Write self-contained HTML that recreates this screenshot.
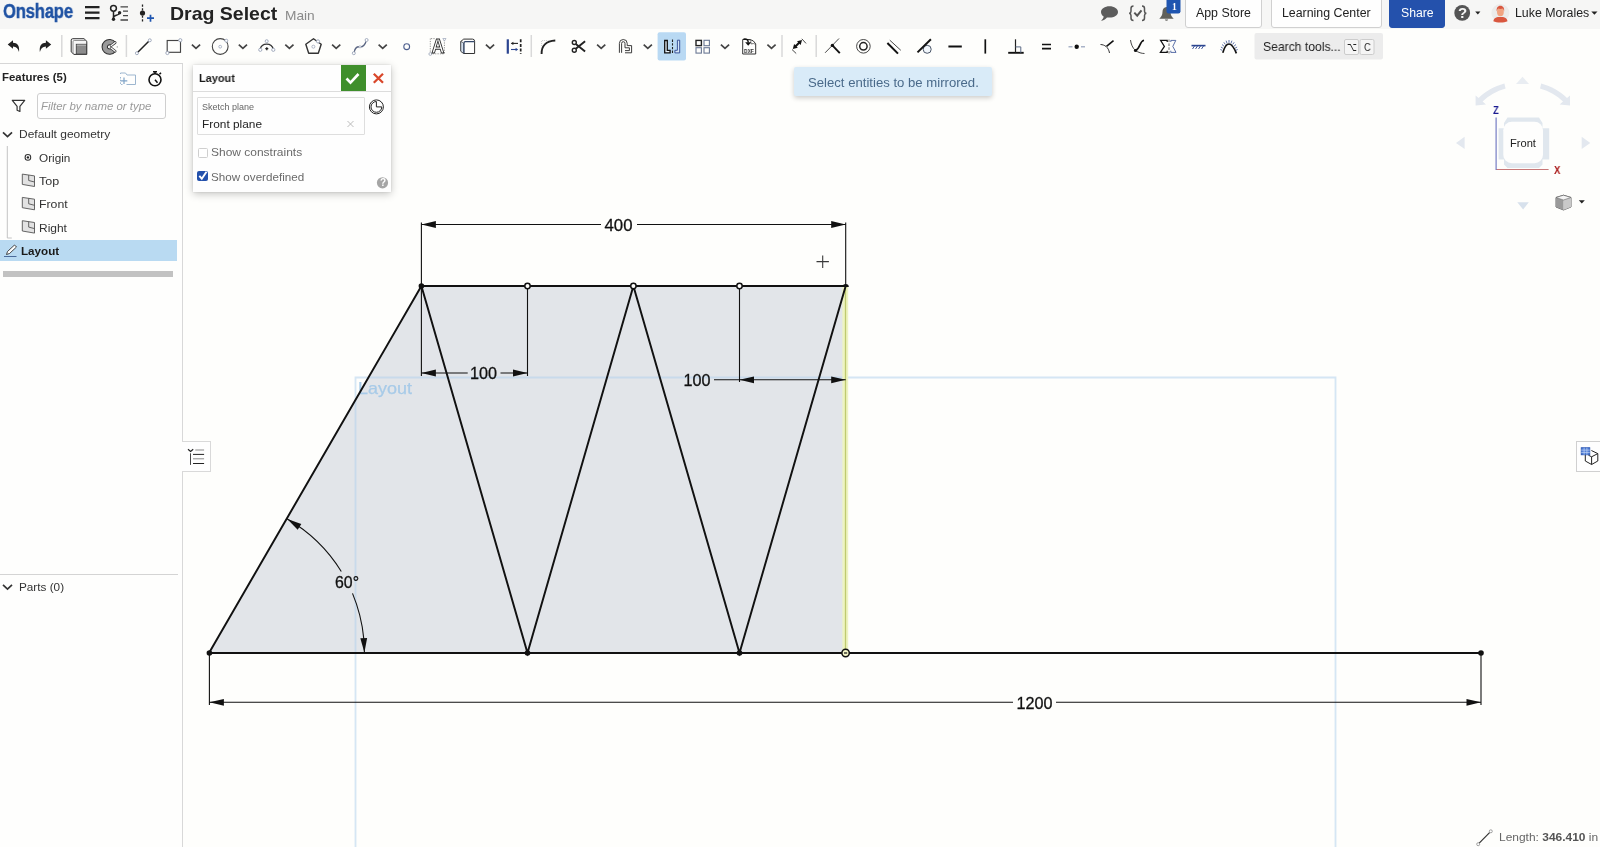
<!DOCTYPE html>
<html lang="en">
<head>
<meta charset="utf-8">
<title>Drag Select - Onshape</title>
<style>
*{box-sizing:border-box;margin:0;padding:0}
html,body{width:1600px;height:847px;overflow:hidden;background:#fefefc;font-family:"Liberation Sans",sans-serif;color:#222}
#app{position:relative;width:1600px;height:847px;overflow:hidden;background:#fefefc}
.abs{position:absolute}
.t{position:absolute;white-space:nowrap;transform-origin:0 50%;line-height:1;will-change:transform}
#hdr{position:absolute;left:0;top:0;width:1600px;height:29px;background:#f6f6f5}
#tb{position:absolute;left:0;top:28px;width:1600px;height:36px}
.btn{position:absolute;top:-3px;height:30.5px;background:#fefefe;border:1px solid #d0d0d0;border-radius:3px}
#panel{position:absolute;left:0;top:64px;width:183px;height:783px;background:#fefefd;border-right:1px solid #d8d8d8}
#panel:before{content:"";position:absolute;left:0;top:-1px;width:183px;height:1px;background:#d6d6d6}
#dlg{position:absolute;left:193px;top:65px;width:198px;height:126.5px;background:#fefefe;box-shadow:0 2px 8px rgba(0,0,0,.23),0 0 2px rgba(0,0,0,.12)}
#cv{position:absolute;left:0;top:0;width:1600px;height:847px}
svg{will-change:transform}
</style>
</head>
<body>
<div id="app">

<!-- CANVAS -->
<svg id="cv" viewBox="0 0 1600 847">
<defs>
<path id="arR" d="M0 0 L-14.5 -3.4 L-14.5 3.4 Z" fill="#111"/>
</defs>
<!-- sketch region fill -->
<polygon points="209,653 421.4,286 845.7,286 845.7,653" fill="#e2e5e9"/>
<!-- plane outline -->
<path d="M355.5 847 V377.5 H1335.5 V847" fill="none" stroke="#b3d1ec" stroke-opacity=".55" stroke-width="1.8"/>
<text x="358" y="394" font-family="'Liberation Sans',sans-serif" font-size="16.5" fill="#a8cbe8" stroke="#a8cbe8" stroke-width=".25" textLength="54" lengthAdjust="spacingAndGlyphs">Layout</text>
<!-- yellow mirror line -->
<line x1="845.3" y1="287" x2="845.3" y2="653" stroke="#eef4c2" stroke-width="5.8"/>
<line x1="845.5" y1="287" x2="845.5" y2="653" stroke="#bfca70" stroke-width="1.3"/>
<!-- sketch lines -->
<g stroke="#111" stroke-width="1.95" stroke-linecap="round" fill="none">
<path d="M209 653 L421.4 286 L845.7 286"/>
<path d="M421.4 286 L527.5 653 L633.4 286 L739.5 653 L845.7 286"/>
<path d="M209 653 H1481"/>
</g>
<!-- dimension lines -->
<g stroke="#111" stroke-width="1.1" fill="none">
<path d="M421.4 286 V222.5 M845.7 286 V222.5"/>
<path d="M421.4 224.5 H601 M637 224.5 H845.7"/>
<path d="M421.4 286 V376 M527.5 286 V376"/>
<path d="M421.4 373 H467.7 M500.5 373 H527.5"/>
<path d="M739.5 286 V382"/>
<path d="M714 379.8 H845.7"/>
<path d="M209.4 653 V705 M1481 653 V705"/>
<path d="M209.4 702.3 H1013 M1056 702.3 H1481"/>
<path d="M286.9 518.8 A155 155 0 0 1 341.3 571.5"/>
<path d="M352.5 593.4 A155 155 0 0 1 364.4 653"/>
</g>
<!-- arrows -->
<use href="#arR" transform="translate(421.4 224.5) rotate(180)"/>
<use href="#arR" transform="translate(845.7 224.5)"/>
<use href="#arR" transform="translate(421.4 373) rotate(180)"/>
<use href="#arR" transform="translate(527.5 373)"/>
<use href="#arR" transform="translate(739.5 379.8) rotate(180)"/>
<use href="#arR" transform="translate(845.7 379.8)"/>
<use href="#arR" transform="translate(209.4 702.3) rotate(180)"/>
<use href="#arR" transform="translate(1481 702.3)"/>
<use href="#arR" transform="translate(287.3 519) rotate(-147.3)"/>
<use href="#arR" transform="translate(364.4 652.6) rotate(87.3)"/>
<!-- dim text -->
<g font-family="'Liberation Sans',sans-serif" font-size="16.5" fill="#111" stroke="#111" stroke-width=".3" text-anchor="middle">
<text x="618.5" y="231" textLength="28" lengthAdjust="spacingAndGlyphs">400</text>
<text x="483.5" y="379" textLength="27" lengthAdjust="spacingAndGlyphs">100</text>
<text x="697" y="386" textLength="27" lengthAdjust="spacingAndGlyphs">100</text>
<text x="1034.5" y="708.5" textLength="36" lengthAdjust="spacingAndGlyphs">1200</text>
<text x="347" y="588" textLength="24" lengthAdjust="spacingAndGlyphs">60°</text>
</g>
<!-- points -->
<g fill="#111">
<circle cx="209.4" cy="653" r="2.8"/>
<circle cx="421.4" cy="286" r="2.8"/>
<circle cx="527.5" cy="653" r="2.8"/>
<circle cx="739.5" cy="653" r="2.8"/>
<circle cx="1481" cy="653" r="2.8"/>
<path d="M842.6 287 a3.1 3.1 0 0 1 6.2 0 z"/>
</g>
<g fill="#fefefc" stroke="#111" stroke-width="1.5">
<circle cx="527.5" cy="286" r="2.7"/>
<circle cx="633.4" cy="286" r="2.7"/>
<circle cx="739.5" cy="286" r="2.7"/>
</g>
<circle cx="845.6" cy="653" r="3.7" fill="#f4f6c8" stroke="#111" stroke-width="1.5"/>
<path d="M844 653 h3.2" stroke="#111" stroke-width="1.2"/>
<!-- cursor -->
<path d="M816.5 261.6 h12.4 M822.7 255.5 v12.4" stroke="#3a3a3a" stroke-width="1.1" fill="none"/>

</svg>

<!-- HEADER -->
<div id="hdr">
<span class="t" id="logo" style="left:3px;top:0.82px;font-size:20.3px;font-weight:bold;color:#1f52a3;letter-spacing:-.3px;-webkit-text-stroke:.45px #1f52a3;transform:scaleX(0.825)">Onshape</span>
<span class="t" id="ttl" style="left:170.48px;top:5.85px;font-size:17.9px;font-weight:bold;color:#222;transform:scaleX(1.09)">Drag Select</span>
<span class="t" id="main" style="left:284.87px;top:8.83px;font-size:13.2px;color:#8a8a8a;transform:scaleX(1.04)">Main</span>
<div class="btn" style="left:1185px;width:77px"></div>
<span class="t" id="apps" style="left:1196.42px;top:6.74px;font-size:12px;color:#222;transform:scaleX(1.03)">App Store</span>
<div class="btn" style="left:1271px;width:111px"></div>
<span class="t" id="lc" style="left:1281.52px;top:6.74px;font-size:12px;color:#222;transform:scaleX(1.03)">Learning Center</span>
<div class="btn" style="left:1389px;width:56px;background:#2451ac;border-color:#2451ac"></div>
<span class="t" id="share" style="left:1400.72px;top:6.74px;font-size:12px;color:#fff;transform:scaleX(1.02)">Share</span>
<span class="t" id="user" style="left:1514.52px;top:6.74px;font-size:12px;color:#222;transform:scaleX(1.03)">Luke Morales</span>
<svg class="abs" style="left:0;top:0" width="1600" height="28" viewBox="0 0 1600 28">
<!-- hamburger -->
<path d="M85 7.2h14.5M85 12.7h14.5M85 18.2h14.5" stroke="#222" stroke-width="2.2"/>
<!-- branch icon -->
<g stroke="#222" fill="none">
<circle cx="113.5" cy="8.3" r="2.9" stroke-width="1.5"/>
<path d="M113.5 11.2V19" stroke-width="1.5"/>
<path d="M113.5 17.5c0-3 5.5-1.5 6-4.5" stroke-width="1.5"/>
<path d="M120.5 6.8h7.5M123 11.2h5M123 15.6h5M120.5 20h7.5" stroke-width="1.3" stroke="#444"/>
</g>
<circle cx="113.5" cy="19.3" r="1.7" fill="#222"/><circle cx="119.6" cy="12.8" r="1.7" fill="#222"/>
<!-- dot plus icon -->
<path d="M142.5 4.5V21.5" stroke="#222" stroke-width="1.3" stroke-dasharray="2.2 1.5"/>
<circle cx="142.5" cy="13" r="2.6" fill="#222"/>
<path d="M147 18.2h7M150.5 14.7v7" stroke="#1f55b0" stroke-width="1.7"/>
<!-- chat -->
<path d="M1109.5 6.2c4.7 0 8.5 2.5 8.5 5.7s-3.8 5.7-8.5 5.7c-.9 0-1.7-.1-2.5-.2-1.6 1.7-3.5 2.9-6 3.4 1.5-1.2 2.4-2.7 2.7-4.3-1.7-1.1-2.7-2.7-2.7-4.6 0-3.2 3.8-5.7 8.5-5.7z" fill="#5c5c5c"/>
<!-- {check} -->
<g stroke="#555" stroke-width="1.5" fill="none">
<path d="M1133.5 6c-2 0-2.5.8-2.5 2.5v2.7c0 1.2-.6 1.9-1.8 2.1 1.2.2 1.8.9 1.8 2.1V18c0 1.7.5 2.5 2.5 2.5"/>
<path d="M1142 6c2 0 2.5.8 2.5 2.5v2.7c0 1.2.6 1.9 1.8 2.1-1.2.2-1.8.9-1.8 2.1V18c0 1.7-.5 2.5-2.5 2.5"/>
<path d="M1134.3 12.6l2.900 3.1 4.300-5.400" stroke-width="2"/>
</g>
<!-- bell -->
<path d="M1166.5 7c-2.6 0-4 2.2-4 4.8 0 3.300-1.2 5.2-3.2 7h14.4c-2-1.8-3.2-3.700-3.2-7 0-2.6-1.4-4.8-4-4.8zM1164.8 19.6a1.8 1.8 0 0 0 3.4 0z" fill="#60605a"/>
<rect x="1166.5" y="-3" width="14" height="16.5" rx="2.2" fill="#1f55b0"/>
<!-- help -->
<circle cx="1462.2" cy="12.9" r="7.9" fill="#555"/>
<path d="M1475.2 11.4h5.2l-2.6 3.1z" fill="#222"/>
<path d="M1591.3 11.4h6.2l-3.1 3.4z" fill="#222"/>
<!-- avatar -->
<circle cx="1500.4" cy="13" r="9" fill="#ebebea"/>
<path d="M1493.3 21.3c.3-2.6 2.3-3.8 4.5-4.2h5.2c2.2.4 4.2 1.6 4.5 4.2-1.8 1-4.2 1.2-7.1 1.2s-5.3-.2-7.1-1.2z" fill="#d9573f"/>
<ellipse cx="1500.4" cy="11.7" rx="3.4" ry="4.5" fill="#f1a481"/>
<path d="M1496.7 11.5c-.5-3.5 1-5.8 3.7-5.8s4.2 2.3 3.7 5.8c-.3-1.8-1-2.6-1.5-3-1.4.5-3 .5-4.4 0-.5.4-1.2 1.2-1.5 3z" fill="#d9573f"/>
</svg>
<span class="t" id="b1" style="left:1171.6px;top:3.3px;font-size:9.5px;font-weight:bold;font-family:'Liberation Serif',serif;color:#fff">1</span>
<span class="t" id="q" style="left:1458px;top:5px;font-size:15px;font-weight:bold;color:#f6f6f5">?</span>

</div>

<!-- TOOLBAR -->
<div id="tb">
<svg class="abs" style="left:0;top:0" width="1600" height="36" viewBox="0 28 1600 36">
<defs>
<path id="chev" d="M-4.1 -1.9L0 1.9L4.1 -1.9" fill="none" stroke="#444" stroke-width="1.7"/>
</defs>
<!-- active button bg -->
<rect x="657.6" y="32.3" width="28.4" height="28.2" rx="2" fill="#b9d9f3"/>
<!-- separators -->
<path d="M61.8 35v22M126.4 35v22M531.3 35v22M782 35v22M816.2 35v22" stroke="#d9d9d9" stroke-width="1.5"/>
<!-- chevrons -->
<use href="#chev" x="196" y="46.5"/><use href="#chev" x="242.9" y="46.5"/><use href="#chev" x="289.4" y="46.5"/><use href="#chev" x="336.2" y="46.5"/><use href="#chev" x="382.7" y="46.5"/><use href="#chev" x="490" y="46.5"/><use href="#chev" x="601.2" y="46.5"/><use href="#chev" x="647.8" y="46.5"/><use href="#chev" x="725" y="46.5"/><use href="#chev" x="771.5" y="46.5"/>
<!-- undo / redo -->
<path d="M7.7 44.5l5.3-4.2v2.4c4.3 0 6.9 3 6 9.4-.9-3.7-2.6-5.5-6-5.6v2.3z" fill="#222"/>
<path d="M51.2 44.5l-5.3-4.2v2.4c-4.3 0-6.9 3-6 9.4.9-3.7 2.6-5.5 6-5.6v2.3z" fill="#222"/>
<!-- extrude -->
<g>
<path d="M71.2 40.2q0-1.5 1.5-1.5h11.3l2.8 2.6v13.1h-12.8l-2.8-2.5z" fill="#f6f6f6" stroke="#333" stroke-width="1"/>
<path d="M73 54v-12.3q0-1.2 1.2-1.2h12.2" fill="none" stroke="#777" stroke-width=".8"/>
<rect x="76.3" y="44.3" width="10.2" height="9.8" fill="#8c8c8c" stroke="#444" stroke-width=".9"/>
<path d="M76.8 45.2h9.2" stroke="#b8b8b8" stroke-width="1.1"/>
</g>
<!-- revolve -->
<g>
<path d="M115.41 42.45A7.4 7.4 0 1 0 115.41 51.35L111.18 48.16A2.1 2.1 0 1 1 111.18 45.64Z" fill="#9a9a9a" stroke="#333" stroke-width="1.1" stroke-linejoin="round"/>
<path d="M115.2 42.6L111 45.8M115.2 51.2L111 48" stroke="#333" stroke-width="2.6" stroke-linecap="round"/>
<path d="M115.2 42.6L111 45.8M115.2 51.2L111 48" stroke="#fdfdfd" stroke-width="1.2" stroke-linecap="round"/>
<circle cx="117.3" cy="46.9" r=".7" fill="#999"/>
</g>
<!-- line -->
<path d="M137.8 52.2L148.8 41.2" stroke="#222" stroke-width="1.5"/>
<circle cx="136.9" cy="53.2" r="1.5" fill="#fff" stroke="#9aa4b8" stroke-width=".9"/><circle cx="149.8" cy="40.3" r="1.5" fill="#fff" stroke="#9aa4b8" stroke-width=".9"/>
<!-- rectangle -->
<rect x="167.2" y="40.5" width="13.3" height="11.8" fill="none" stroke="#444" stroke-width="1.15"/>
<circle cx="180.3" cy="40.2" r="1.6" fill="#fff" stroke="#9aa4b8" stroke-width=".9"/><circle cx="167.4" cy="53" r="1.6" fill="#fff" stroke="#9aa4b8" stroke-width=".9"/>
<!-- circle -->
<circle cx="220.2" cy="46.5" r="7.9" fill="none" stroke="#444" stroke-width="1.1"/>
<circle cx="220.2" cy="46.7" r="1.4" fill="#fff" stroke="#9aa4b8" stroke-width=".8"/><circle cx="226.3" cy="40.7" r="1.5" fill="#fff" stroke="#9aa4b8" stroke-width=".9"/>
<!-- arc -->
<path d="M260 49.3A6.9 6.9 0 0 1 273.4 49.3" fill="none" stroke="#333" stroke-width="1.3"/>
<circle cx="260.3" cy="49.8" r="1.6" fill="#fff" stroke="#9aa4b8" stroke-width=".9"/><circle cx="273.3" cy="49.8" r="1.6" fill="#fff" stroke="#9aa4b8" stroke-width=".9"/><circle cx="266.7" cy="41.2" r="1.5" fill="#fff" stroke="#9aa4b8" stroke-width=".9"/>
<path d="M265.3 48.7h3M266.8 47.2v3" stroke="#222" stroke-width="1.3"/>
<!-- polygon -->
<path d="M313.5 38.7l7.7 5.6-2.9 9h-9.600l-2.9-9z" fill="none" stroke="#333" stroke-width="1.4" stroke-linejoin="round"/>
<circle cx="313.4" cy="46.7" r="1.5" fill="#fff" stroke="#9aa4b8" stroke-width=".8"/><circle cx="318" cy="41.4" r="1.6" fill="#fff" stroke="#9aa4b8" stroke-width=".9"/>
<!-- spline -->
<path d="M354.3 52c.5-3.5 2.5-5.5 5.5-5.2 2.5.3 5-1.3 6.3-5.5" fill="none" stroke="#5a6582" stroke-width="1.3"/>
<circle cx="353.8" cy="53.2" r="1.5" fill="#fff" stroke="#9aa4b8" stroke-width=".9"/><circle cx="366.6" cy="40" r="1.5" fill="#fff" stroke="#9aa4b8" stroke-width=".9"/><circle cx="360" cy="46.8" r="1.1" fill="#fff" stroke="#9aa4b8" stroke-width=".7"/>
<!-- point -->
<circle cx="406.7" cy="46.7" r="2.9" fill="none" stroke="#4e5f8e" stroke-width="1.1"/>
<!-- text tool -->
<path d="M430.3 38.5v15.5M430.3 53.8h14M444.4 40v13.8M431 38.6h4" stroke="#777" stroke-width=".8" stroke-dasharray="1.2 1.2" fill="none"/>
<circle cx="430.3" cy="54" r="1.4" fill="#fff" stroke="#9aa4b8" stroke-width=".8"/><path d="M442.8 38.5h3.2l-1.6 2.6z" fill="#fff" stroke="#9aa4b8" stroke-width=".7"/>
<text x="431.4" y="53.1" font-family="'Liberation Sans',sans-serif" font-size="19.4" font-weight="bold" fill="#fefefd" stroke="#2a2a2a" stroke-width=".9" textLength="12.9" lengthAdjust="spacingAndGlyphs">A</text>
<!-- use/project cube -->
<path d="M460.8 41.4l2.9-2.3h8.8q2.1 0 2.1 2.1v12.3h-11l-2.8-2.3z" fill="#fefefd" stroke="#333" stroke-width="1" stroke-linejoin="round"/>
<path d="M460.8 41.4l2.8 1.6v10.5l-2.8-2.3z" fill="#d3dfee" stroke="#444" stroke-width=".7" stroke-linejoin="round"/>
<path d="M464 53.2v-10.3q0-1.3 1.3-1.3h9" fill="none" stroke="#33476a" stroke-width="1.2"/>
<!-- construction -->
<path d="M507.8 39.3v14.4" stroke="#2b4590" stroke-width="2.2"/>
<path d="M520.7 39.3v14.4" stroke="#222" stroke-width="1.7" stroke-dasharray="3 1.6"/>
<path d="M511.5 43.4h6.5" stroke="#222" stroke-width="1.1"/><path d="M510.8 43.4l2.6-1.7v3.4z" fill="#222"/>
<path d="M511 49.5h6" stroke="#2b4590" stroke-width="1.1"/><path d="M518.2 49.5l-2.6-1.7v3.4z" fill="#2b4590"/>
<!-- fillet -->
<path d="M541.6 54c-.3-8 4.5-13 13.7-13.5" fill="none" stroke="#222" stroke-width="1.9"/>
<path d="M541.6 46v-5.5h7" fill="none" stroke="#bbb" stroke-width=".8" stroke-dasharray="1 1"/>
<!-- scissors -->
<g fill="none" stroke="#222">
<circle cx="574.3" cy="42.5" r="2" stroke-width="1.4"/><circle cx="574.3" cy="50.2" r="2" stroke-width="1.4"/>
<path d="M575.8 43.9l9.3 7.6M575.8 48.8l9.3-7.6" stroke-width="1.9"/>
</g>
<!-- offset -->
<g fill="none" stroke="#333" stroke-width=".95">
<path d="M619.4 52.8v-9.4a3.9 3.9 0 0 1 7.8 0v2.2h4.4v7.2h-6.6"/>
<path d="M621.6 52.8v-9.4a1.7 1.7 0 0 1 3.4 0v4.4h4.4v2.8h-4.4"/>
</g>
<!-- mirror -->
<path d="M664.7 40.5h2.6v9.8h2.8v2.6h-5.4z" fill="#e6f1fb" stroke="#111" stroke-width="1.3" stroke-linejoin="miter"/>
<path d="M672.5 39.5v14.2" stroke="#222" stroke-width="1.1" stroke-dasharray="2.4 1.3"/>
<path d="M679.7 40.2h-2.3v10.1h-2.5v2.6h4.8z" fill="#d3e6f8" stroke="#2b4590" stroke-width=".9"/>
<!-- pattern -->
<rect x="696" y="40.4" width="5.4" height="5.2" fill="none" stroke="#222" stroke-width="1.4"/>
<g fill="none" stroke="#6b7894" stroke-width="1.1"><rect x="704" y="40.3" width="5.4" height="5.4"/><rect x="696" y="47.7" width="5.4" height="5.4"/><rect x="704" y="47.7" width="5.4" height="5.4"/></g>
<!-- dxf -->
<path d="M742.700 39.500h7.300q3.800 .7 5.700 4.300v10.200h-13z" fill="#fefefd" stroke="#333" stroke-width="1"/>
<path d="M749.700 39.700q1.600 1.600 1.300 4.200 2.500-.8 4.500 .3" fill="none" stroke="#555" stroke-width=".8"/>
<path d="M743.500 39.200c3.300-.6 4.800 .8 4.700 3.300" fill="none" stroke="#111" stroke-width="1.500"/><path d="M745.200 42.200h6l-3 3.500z" fill="#111"/>
<!-- dimension -->
<path d="M794.8 47l5.400-5.300" stroke="#111" stroke-width="2"/>
<path d="M792.800 49l1.300-5 3.700 3.700zM802 39.900l-1.300 5-3.700-3.700z" fill="#111"/>
<path d="M792 49.500l4.200 4M801.800 38.800l4.200 4.600" stroke="#333" stroke-width=".9" fill="none"/>
<!-- coincident -->
<path d="M825.1 52.8L839 38.5" stroke="#333" stroke-width=".9"/><path d="M832.4 45.4l7.4 7.8" stroke="#111" stroke-width="1.9"/><circle cx="832.4" cy="45.4" r="1.7" fill="#111"/>
<!-- concentric -->
<circle cx="863.4" cy="46.3" r="6.8" fill="none" stroke="#333" stroke-width=".9"/><circle cx="863.4" cy="46.3" r="3.7" fill="none" stroke="#222" stroke-width="1.5"/>
<!-- parallel -->
<path d="M887.4 43l10.6 10.6" stroke="#111" stroke-width="2"/><path d="M889.8 40.2l11 10.1" stroke="#333" stroke-width=".9"/>
<!-- tangent -->
<circle cx="927.2" cy="49.3" r="4" fill="#f1f6fb" stroke="#4a5568" stroke-width="1"/><path d="M917.5 52.4L930.9 39.3" stroke="#111" stroke-width="2"/>
<!-- horizontal / vertical -->
<path d="M948.4 46.5h13.4" stroke="#111" stroke-width="2"/><path d="M985.3 39.3v14.3" stroke="#111" stroke-width="1.7"/>
<!-- perpendicular -->
<path d="M1008.2 52.8h15.5" stroke="#111" stroke-width="1.9"/><path d="M1015.5 39.3v13.5" stroke="#222" stroke-width="1.2"/><path d="M1015.5 46.9h5.3v5.9" fill="none" stroke="#5b6a85" stroke-width="1"/>
<!-- equal -->
<path d="M1042 44.5h9M1042 48.6h9" stroke="#111" stroke-width="1.7"/>
<!-- midpoint -->
<path d="M1068.5 46.8h4M1081 46.8h4" stroke="#a9b3c8" stroke-width="1.5"/><circle cx="1076.7" cy="46.8" r="2.2" fill="#111"/>
<!-- normal -->
<path d="M1100.5 44.5c4 .2 8 2.5 9 8.5" fill="none" stroke="#333" stroke-width="1"/><path d="M1106.5 46.4l7-5.800" stroke="#111" stroke-width="1.6"/>
<!-- pierce -->
<path d="M1130.5 40c.5 4 2 8 5 10.5" fill="none" stroke="#333" stroke-width=".9"/><path d="M1135.5 50.5c5.5-2.5 3.5-9 8.5-10.3" fill="none" stroke="#111" stroke-width="1.6"/><path d="M1135.5 50.5c3 2 6 3 9 3" fill="none" stroke="#333" stroke-width=".9"/><circle cx="1135.5" cy="50.5" r="1.6" fill="#111"/>
<!-- symmetric -->
<path d="M1167.2 42v-1.600h-6.600l3.800 6-4 6h6.800v-1.700" fill="none" stroke="#111" stroke-width="1.25"/><path d="M1169 39.500v14" stroke="#444" stroke-width=".8" stroke-dasharray="2.600 1.300"/><path d="M1170.800 42v-1.600h5l-3 6 3.200 6h-5.200v-1.700" fill="none" stroke="#3a5396" stroke-width=".85"/>
<!-- fix -->
<path d="M1191.5 45.6h14" stroke="#2b4590" stroke-width="1.6"/><path d="M1194.5 46l-2 3M1197.5 46l-2 3M1200.5 46l-2 3M1203.5 46l-2 3" stroke="#2b4590" stroke-width=".9"/>
<!-- curvature -->
<path d="M1222.800 52.700c1.500-5.200 3.500-8.700 6.200-8.700s5 3.500 7.400 9.300" fill="none" stroke="#111" stroke-width="1.700"/>
<path d="M1222.200 50.300l-1.800-.8M1222.900 48.200l-2-1.200M1224 46.200l-2-1.700M1225.400 44.500l-1.600-2.200M1227 43.300l-.9-2.600M1229 42.800v-2.800M1231 43.300l.9-2.600M1232.600 44.500l1.600-2.200M1234 46.200l2-1.700M1235.100 48.200l2-1.200M1235.900 50.300l1.800-.8" stroke="#2b4590" stroke-width=".75"/>
<!-- search box -->
<rect x="1254.5" y="33" width="128.5" height="26.5" rx="2" fill="#ececec"/>
<rect x="1344.5" y="39.5" width="14" height="15" rx="1.5" fill="#f5f5f5" stroke="#ccc" stroke-width="1"/><rect x="1360" y="39.5" width="14" height="15" rx="1.5" fill="#f5f5f5" stroke="#ccc" stroke-width="1"/>
</svg>
<span class="t" id="dxf" style="left:743.6px;top:19.8px;font-size:6.2px;font-weight:bold;color:#333;transform:scaleX(.8)">DXF</span>
<span class="t" id="srch" style="left:1263px;top:12.5px;font-size:12.4px;color:#222;transform:scaleX(0.98)">Search tools...</span>
<span class="t" id="keyo" style="left:1346.8px;top:14.9px;transform:scaleY(1.4);font-size:8.6px;font-family:'DejaVu Sans','Liberation Sans',sans-serif;color:#222">⌥</span>
<span class="t" id="keyc" style="left:1363.6px;top:15px;font-size:10px;color:#222;transform:scaleX(.92)">C</span>

</div>

<!-- FEATURE PANEL -->
<div id="panel">
<span class="t" id="feat" style="left:1.95px;top:7.92px;font-size:11.2px;font-weight:bold;color:#222;transform:scaleX(1.02)">Features (5)</span>
<div class="abs" style="left:37px;top:28.5px;width:129px;height:26px;border:1px solid #cfcfcf;border-radius:3px;background:#fefefe"></div>
<span class="t" id="filt" style="left:41.35px;top:37.12px;font-size:11.2px;font-style:italic;color:#9a9a9a;transform:scaleX(1.02)">Filter by name or type</span>
<span class="t" id="defg" style="left:18.85px;top:64.92px;font-size:11.2px;color:#333;transform:scaleX(1.07)">Default geometry</span>
<span class="t" id="orig" style="left:39.25px;top:88.52px;font-size:11.2px;color:#333;transform:scaleX(1.05)">Origin</span>
<span class="t" id="top" style="left:39.25px;top:111.52px;font-size:11.2px;color:#333;transform:scaleX(1.12)">Top</span>
<span class="t" id="front" style="left:39.25px;top:134.72px;font-size:11.2px;color:#333;transform:scaleX(1.1)">Front</span>
<span class="t" id="right" style="left:39.25px;top:159.12px;font-size:11.2px;color:#333;transform:scaleX(1.07)">Right</span>
<div class="abs" style="left:0;top:176px;width:177px;height:21px;background:#b9daf2"></div>
<span class="t" id="lay" style="left:21.45px;top:182.32px;font-size:11.2px;font-weight:bold;color:#1a1a1a;transform:scaleX(1.04)">Layout</span>
<div class="abs" style="left:2.6px;top:206.5px;width:170.2px;height:6px;background:#c2c2c2"></div>
<div class="abs" style="left:0;top:510px;width:177.5px;height:1px;background:#d4d4d4"></div>
<span class="t" id="parts" style="left:18.95px;top:518.22px;font-size:11.2px;color:#333;transform:scaleX(1.05)">Parts (0)</span>
<svg class="abs" style="left:0;top:0" width="183" height="783" viewBox="0 64 183 783">
<defs><g id="pl"><path d="M0 0l12.2 1.8v10.6l-12.2-2.1z" fill="#e2e2e2" stroke="#555" stroke-width=".9" stroke-linejoin="round"/><path d="M6.4 1v5.4l5.8 1.5" fill="none" stroke="#555" stroke-width=".9"/></g></defs>
<!-- folder plus -->
<g fill="none" stroke="#9db6cf" stroke-width="1">
<path d="M120.5 74v-1h5l1.5 2h8.5v9.5h-9" /><path d="M120.5 77v7.5h2" stroke-dasharray="1.5 1.2"/>
<path d="M120.8 80.8h6.5M124 77.5v6.5" stroke="#7fa3c7" stroke-width="1.2"/>
</g>
<!-- stopwatch -->
<circle cx="155" cy="79.8" r="6" fill="none" stroke="#111" stroke-width="1.6"/>
<path d="M153 71.8h4M155 72v2M159.5 74.3l1.5-1.5M155 79.8l2.5 3" stroke="#111" stroke-width="1.5" fill="none"/>
<!-- funnel -->
<path d="M12.3 100.3h12.4l-4.8 6v5.2l-2.8-1.2v-4z" fill="none" stroke="#333" stroke-width="1.2" stroke-linejoin="round"/>
<!-- chevrons -->
<path d="M3 132.3l4.5 4.2 4.5-4.2" fill="none" stroke="#333" stroke-width="1.7"/>
<path d="M3 584.8l4.5 4.2 4.5-4.2" fill="none" stroke="#333" stroke-width="1.7"/>
<!-- tree line -->
<path d="M7.3 146v92h4.5" fill="none" stroke="#c4c4c4" stroke-width="1"/>
<!-- origin -->
<circle cx="27.9" cy="157.4" r="2.8" fill="#fff" stroke="#333" stroke-width="1.05"/><circle cx="27.9" cy="157.4" r="1.2" fill="#222"/>
<use href="#pl" x="22.3" y="174.1"/><use href="#pl" x="22.3" y="197.4"/><use href="#pl" x="22.3" y="220.7"/>
<!-- sketch pencil -->
<path d="M6.5 254.5l1-3 7-6.5 2 2-7 6.5z" fill="#fff" stroke="#333" stroke-width=".9" stroke-linejoin="round"/><path d="M4 256.5h12.5" stroke="#4a6a9a" stroke-width="1"/>
</svg>

</div>

<!-- DIALOG -->
<div id="dlg">
<div class="abs" style="left:0;top:25.5px;width:198px;height:1px;background:#dcdcdc"></div>
<span class="t" id="dlay" style="left:6.05px;top:7.52px;font-size:11.2px;font-weight:bold;color:#1a1a1a;transform:scaleX(0.98)">Layout</span>
<div class="abs" style="left:147.5px;top:0;width:25px;height:25.5px;background:#3f8f2c"></div>
<div class="abs" style="left:3.5px;top:31.5px;width:168px;height:38px;border:1px solid #dedede;border-radius:1px;background:#fefefe"></div>
<span class="t" id="skp" style="left:8.54px;top:38.38px;font-size:9px;color:#666">Sketch plane</span>
<span class="t" id="fpl" style="left:9.45px;top:54.32px;font-size:11.2px;color:#222;transform:scaleX(1.06)">Front plane</span>
<div class="abs" style="left:4.5px;top:82.5px;width:10px;height:10px;border:1px solid #cfcfcf;border-radius:1.5px;background:#fff"></div>
<span class="t" id="shc" style="left:18.45px;top:81.92px;font-size:11.2px;color:#6a6a6a;transform:scaleX(1.07)">Show constraints</span>
<div class="abs" style="left:4.2px;top:106px;width:10.4px;height:10.3px;border-radius:2px;background:#2451ac"></div>
<span class="t" id="sho" style="left:18.45px;top:107.22px;font-size:11.2px;color:#6a6a6a;transform:scaleX(1.04)">Show overdefined</span>
<svg class="abs" style="left:0;top:0" width="198" height="126" viewBox="193 65 198 126">
<path d="M346.5 78.5l4 4.2 8-8.7" fill="none" stroke="#fff" stroke-width="2.6"/>
<path d="M373.8 73.8l9.2 9M383 73.8l-9.2 9" stroke="#d9472b" stroke-width="2.3"/>
<path d="M347.5 121l6 6M353.5 121l-6 6" stroke="#b5b5b5" stroke-width=".9"/>
<circle cx="376.4" cy="106.9" r="7" fill="none" stroke="#222" stroke-width="1"/>
<path d="M376.4 101.5v5.4h5.4a5.4 5.4 0 1 1-5.4-5.4z" fill="none" stroke="#222" stroke-width="1"/>
<path d="M199.3 175.8l2.5 2.9 4.7-7" fill="none" stroke="#fff" stroke-width="1.9"/>
<circle cx="382.5" cy="182.8" r="5.6" fill="#a5a5a5"/>
</svg>
<span class="t" id="dq" style="left:186.5px;top:113px;font-size:10px;font-weight:bold;color:#fefefe">?</span>

</div>

<!-- tooltip -->
<div class="abs" style="left:793.7px;top:67px;width:198.7px;height:28.6px;background:#d9ebf8;border-radius:2px;box-shadow:0 2px 5px rgba(0,0,0,.2)"></div>
<span class="t" id="tip" style="left:807.8px;top:77.4px;font-size:12.4px;color:#4a6a8a;transform:scaleX(1.06)">Select entities to be mirrored.</span>
<!-- side buttons -->
<div class="abs" style="left:182px;top:441px;width:29px;height:31px;background:#fefefe;border:1px solid #d9d9d9;border-left:none"></div>
<div class="abs" style="left:1576px;top:441px;width:26px;height:31px;background:#fefefe;border:1px solid #d0d0d0"></div>
<svg class="abs" style="left:0;top:0;pointer-events:none" width="1600" height="847" viewBox="0 0 1600 847">
<!-- left flyout icon -->
<g fill="none">
<path d="M190.5 453.3v11.6" stroke="#333" stroke-width=".9"/><path d="M188 449.3l2.6 2.2 2.6-2.2" stroke="#222" stroke-width="1.2"/>
<path d="M195.3 450h8.800M193 458.800h11.1" stroke="#8a8a8a" stroke-width="1"/><path d="M193 454.4h11.1M193 463.5h11.1" stroke="#222" stroke-width="1"/>
</g>
<!-- right config icon -->
<path d="M1591.4 450.5l6.4 3.1v7.4l-6.2 3.5-6.3-3.5v-6.5M1597.800 453.6l-6.2 3.2v7.700M1591.6 456.800l-3.2-1.6" fill="none" stroke="#222" stroke-width="1"/>
<rect x="1581.2" y="447.700" width="8.6" height="7.1" fill="#4a7ad6" stroke="#2b55b0" stroke-width=".8"/>
<path d="M1581.2 450.1h8.6M1581.2 452.4h8.6M1584.1 447.700v7.1M1586.900 447.700v7.1" stroke="#c9d9f5" stroke-width=".7"/>
<!-- view cube -->
<g fill="#e3e8ef">
<path d="M1516 84l6.5-7.3 6.6 7.3z" opacity=".8"/>
<path d="M1517.3 202.3h11.5l-5.7 7.2z" fill="#d7e1ec"/>
<path d="M1464.6 136.800v12.2l-8.6-6.1z"/>
<path d="M1581.7 136.800v12.2l8.6-6.1z"/>
<path d="M1504.4 83.6c-10.3 2.900-19 7.7-25.800 14.4l-3-2.6v10.2l10.4-1.1-3.4-2.900c6.3-6 13.7-10.2 23-13z"/>
<path d="M1541.2 83.6c10.3 2.900 19 7.7 25.800 14.4l3-2.6v10.2l-10.4-1.1 3.4-2.900c-6.3-6-13.7-10.2-23-13z"/>
</g>
<path d="M1507.5 117.5h31.5l3.5 5.5v5.3h6.7v31.2h-6.7v5l-3.5 3.5h-31.5l-3.5-3.5v-5h-5.4v-31.2h5.4v-5.3z" fill="#e0e7ee"/>
<rect x="1503.3" y="121.7" width="39.7" height="41.5" rx="8.5" fill="#fefefd"/>
<path d="M1496.1 169.5h52.5" stroke="#c87878" stroke-width="1.1"/>
<path d="M1496.1 117.5v52.5" stroke="#6a72c0" stroke-width="1.1"/>
<!-- small cube -->
<path d="M1556 197.5l7.5-2.3 7.5 2.3v9.5l-7.5 3-7.5-3z" fill="#d8d8d8" stroke="#555" stroke-width=".9" stroke-linejoin="round"/>
<path d="M1556 197.5l7.5 2.5v10l-7.5-3z" fill="#9a9a9a"/><path d="M1563.5 200l7.5-2.5v9.5l-7.5 3z" fill="#c9c9c9"/><path d="M1556 197.5l7.5-2.3 7.5 2.3-7.5 2.5z" fill="#f4f4f4" stroke="#666" stroke-width=".6"/>
<path d="M1578.8 200.2h6l-3 3.3z" fill="#222"/>
<!-- length icon -->
<path d="M1479.2 843.2l10.600-10.900" stroke="#333" stroke-width="1.2"/><circle cx="1478.2" cy="844.2" r="1.5" fill="#fff" stroke="#8a8a8a" stroke-width=".8"/><circle cx="1490.8" cy="831.3" r="1.5" fill="#fff" stroke="#8a8a8a" stroke-width=".8"/>
</svg>
<span class="t" id="vz" style="left:1493.3px;top:105px;font-size:10.5px;font-weight:bold;color:#1a1a90;transform:scaleX(.9)">Z</span>
<span class="t" id="vx" style="left:1553.5px;top:165.3px;font-size:10.5px;font-weight:bold;color:#a81414;transform:scaleX(.9)">X</span>
<span class="t" id="vfront" style="left:1509.89px;top:139.48px;font-size:10.3px;color:#222;transform:scaleX(1.08)">Front</span>
<span class="t" id="len" style="left:1498.94px;top:831.55px;font-size:11.4px;color:#666;transform:scaleX(1.05)">Length: <b style="color:#555">346.410</b> in</span>


</div>
</body>
</html>
